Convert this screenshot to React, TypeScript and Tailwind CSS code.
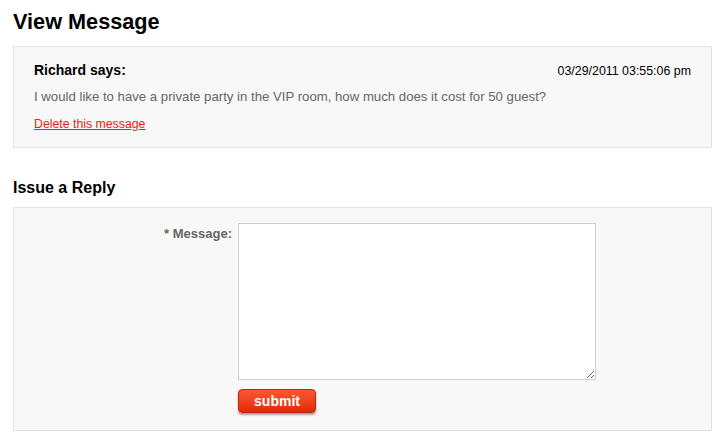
const App = () => {
  return (
    <div className="min-h-screen bg-white px-[13px] pt-[9px] pr-[14px] font-['Liberation_Sans',Arial,sans-serif]">
      <h1 className="text-[21.7px] font-bold leading-[26px] text-black">View Message</h1>

      <section className="mt-[11px] border border-[#e3e3e3] bg-[#f8f8f8] px-[20px] pt-[13px] pb-[15px]">
        <div className="flex items-baseline justify-between">
          <h3 className="text-[14px] font-bold leading-[20px] text-black">Richard says:</h3>
          <span className="text-[12.4px] leading-[20px] text-black">03/29/2011 03:55:06 pm</span>
        </div>
        <p className="mt-[6px] text-[13.2px] leading-[20px] text-[#666666]">
          I would like to have a private party in the VIP room, how much does it cost for 50 guest?
        </p>
        <a href="#" className="mt-[9px] block w-fit text-[12.3px] leading-[16px] text-[#ee1c0e] underline">
          Delete this message
        </a>
      </section>

      <h2 className="mt-[30px] text-[16px] font-bold leading-[20px] text-black">Issue a Reply</h2>

      <section className="mt-[9px] border border-[#e3e3e3] bg-[#f8f8f8] pt-[15px] pb-[17px]">
        <div className="flex">
          <label
            htmlFor="message"
            className="mt-[3px] w-[218px] shrink-0 text-right text-[13px] font-bold leading-[16px] text-[#666666]"
          >
            * Message:
          </label>
          <div className="ml-[6px] flex flex-col">
            <textarea
              id="message"
              className="h-[157px] w-[358px] border border-[#cfcfcf] bg-white p-1 text-[13px] outline-none"
            />
            <button
              type="submit"
              className="mt-[9px] h-[24px] w-[78px] rounded-[4px] border border-[#c8200a] bg-gradient-to-b from-[#fa5632] to-[#e12a04] text-[14px] font-bold leading-[20px] text-white shadow-[0_2px_2px_rgba(0,0,0,0.35)]"
            >
              submit
            </button>
          </div>
        </div>
      </section>
    </div>
  )
}

export default App
